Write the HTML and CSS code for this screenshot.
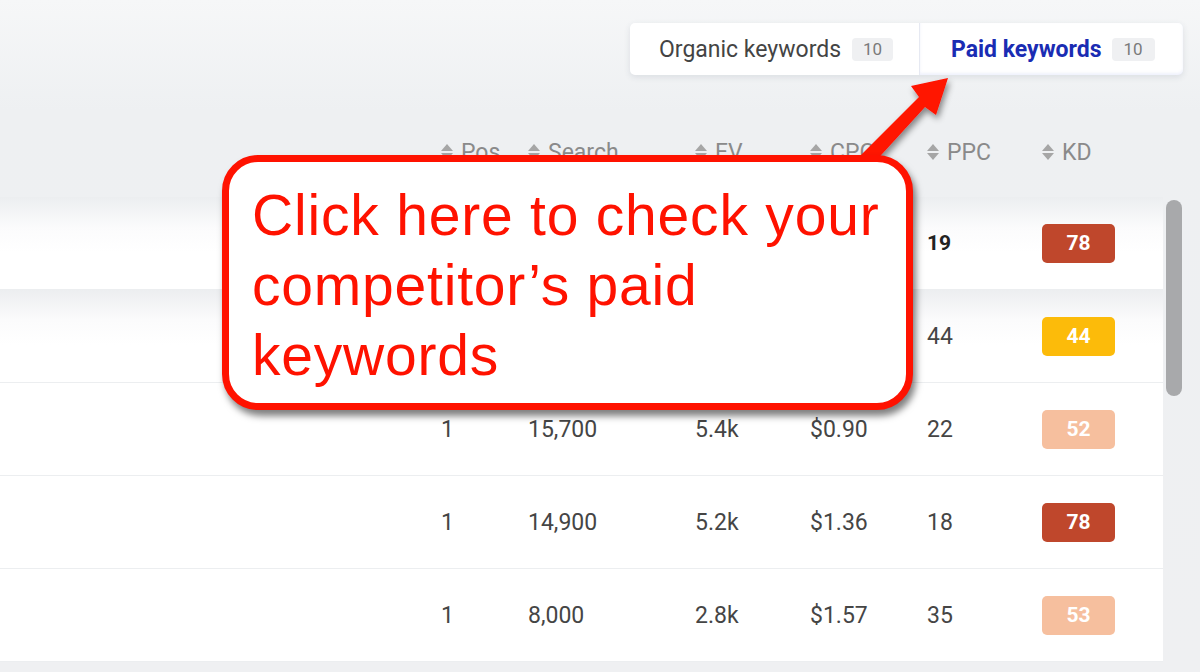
FILE: index.html
```html
<!DOCTYPE html>
<html>
<head>
<meta charset="utf-8">
<link rel="stylesheet" href="styles.css">
</head>
<body>
<div class="page">
  <div class="topbar">
    <div class="tabs">
      <div class="tab">
        <span class="tab-label">Organic keywords</span>
        <span class="count">10</span>
      </div>
      <div class="tab active">
        <span class="tab-label">Paid keywords</span>
        <span class="count">10</span>
      </div>
    </div>
  </div>

  <div class="table-area">
    <div class="table">
      <div class="row head">
        <div class="cell kw"></div>
        <div class="cell"><span class="sort"></span>Pos</div>
        <div class="cell"><span class="sort"></span>Search</div>
        <div class="cell"><span class="sort"></span>EV</div>
        <div class="cell"><span class="sort"></span>CPC</div>
        <div class="cell"><span class="sort"></span>PPC</div>
        <div class="cell"><span class="sort"></span>KD</div>
      </div>
      <div class="row body shade">
        <div class="cell kw"></div>
        <div class="cell"></div>
        <div class="cell"></div>
        <div class="cell"></div>
        <div class="cell"></div>
        <div class="cell strong">19</div>
        <div class="cell"><span class="kd kd-hard">78</span></div>
      </div>
      <div class="row body shade">
        <div class="cell kw"></div>
        <div class="cell"></div>
        <div class="cell"></div>
        <div class="cell"></div>
        <div class="cell"></div>
        <div class="cell">44</div>
        <div class="cell"><span class="kd kd-mid">44</span></div>
      </div>
      <div class="row body">
        <div class="cell kw"></div>
        <div class="cell">1</div>
        <div class="cell">15,700</div>
        <div class="cell">5.4k</div>
        <div class="cell">$0.90</div>
        <div class="cell">22</div>
        <div class="cell"><span class="kd kd-soft">52</span></div>
      </div>
      <div class="row body">
        <div class="cell kw"></div>
        <div class="cell">1</div>
        <div class="cell">14,900</div>
        <div class="cell">5.2k</div>
        <div class="cell">$1.36</div>
        <div class="cell">18</div>
        <div class="cell"><span class="kd kd-hard">78</span></div>
      </div>
      <div class="row body">
        <div class="cell kw"></div>
        <div class="cell">1</div>
        <div class="cell">8,000</div>
        <div class="cell">2.8k</div>
        <div class="cell">$1.57</div>
        <div class="cell">35</div>
        <div class="cell"><span class="kd kd-soft">53</span></div>
      </div>
    </div>
    <div class="scrolltrack">
      <div class="thumb"></div>
    </div>
  </div>

  <svg class="arrow" width="1200" height="672" viewBox="0 0 1200 672">
    <defs>
      <filter id="sh" x="-20%" y="-20%" width="140%" height="140%">
        <feDropShadow dx="2" dy="4" stdDeviation="3" flood-color="#000" flood-opacity="0.45"/>
      </filter>
    </defs>
    <polygon filter="url(#sh)" fill="#ff1200"
      points="851,165 862,176 925,107 936,115 948,78 911,86 919,97"/>
  </svg>

  <div class="callout">
    <p>Click here to check your competitor’s paid keywords</p>
  </div>
</div>
</body>
</html>
```

FILE: styles.css
```css
html, body {
  margin: 0;
  padding: 0;
}
body {
  width: 1200px;
  height: 672px;
  overflow: hidden;
  background: #eff0f2;
  font-family: Roboto, "Noto Sans", sans-serif;
}
.page {
  position: relative;
  width: 1200px;
  height: 672px;
  background: linear-gradient(#f6f7f8, #eef0f2 110px, #eff0f2);
}

/* tabs */
.topbar {
  height: 110px;
  box-sizing: border-box;
  padding: 23px 17px 0 0;
  display: flex;
  justify-content: flex-end;
  align-items: flex-start;
}
.tabs {
  display: flex;
  width: 553px;
  height: 52px;
  background: #fff;
  border-radius: 5px;
  box-shadow: 0 2px 6px rgba(60, 70, 100, 0.12);
}
.tab {
  display: flex;
  align-items: center;
  box-sizing: border-box;
  height: 52px;
}
.tab:first-child {
  width: 290px;
  padding-left: 29px;
  border-right: 1px solid #e6e9f2;
}
.tab.active {
  flex: 1;
  padding-left: 31px;
  box-shadow: inset 0 -2px 3px rgba(120, 140, 230, 0.12);
  border-radius: 0 5px 5px 0;
}
.tab-label {
  font-size: 23px;
  color: #444;
}
.tab.active .tab-label {
  color: #1a2cb3;
  font-weight: 700;
  font-size: 23px;
}
.count {
  margin-left: 11px;
  display: inline-flex;
  align-items: center;
  justify-content: center;
  width: 41px;
  height: 23px;
  border-radius: 4px;
  background: #eff0f2;
  color: #7a7a7a;
  font-size: 17px;
}
.tab.active .count {
  margin-left: 10px;
  width: 43px;
}

/* table */
.table-area {
  display: flex;
  align-items: flex-start;
}
.table {
  width: 1163px;
}
.scrolltrack {
  width: 37px;
  height: 550px;
  box-sizing: border-box;
  padding: 90px 0 0 3px;
}
.thumb {
  width: 16px;
  height: 196px;
  border-radius: 8px;
  background: #a8a9ab;
}
.row {
  display: grid;
  grid-template-columns: 441px 87px 167px 115px 117px 115px 121px;
}
.row.head {
  height: 87px;
  align-items: end;
  padding-bottom: 31px;
  box-sizing: border-box;
  color: #8a8a8a;
  font-size: 23px;
}
.row.head .cell {
  display: flex;
  align-items: center;
  height: 28px;
}
.sort {
  display: inline-block;
  position: relative;
  width: 13px;
  height: 18px;
  margin-right: 7px;
}
.sort::before, .sort::after {
  content: "";
  position: absolute;
  left: 0;
  border-left: 6.5px solid transparent;
  border-right: 6.5px solid transparent;
}
.sort::before {
  top: 1px;
  border-bottom: 7px solid #a6a6a6;
}
.sort::after {
  bottom: 1px;
  border-top: 7px solid #a6a6a6;
}
.row.body {
  height: 93px;
  box-sizing: border-box;
  border-bottom: 1px solid #eceef0;
  background: #fff;
  align-items: center;
  color: #454545;
  font-size: 23px;
}
.row.body.shade {
  background: linear-gradient(#eceef0, #fbfbfc 30px, #fff 55px);
}
.strong {
  font-weight: 700;
  color: #222;
  font-size: 21px;
}
.kd {
  display: inline-flex;
  align-items: center;
  justify-content: center;
  width: 73px;
  height: 39px;
  border-radius: 5px;
  color: #fff;
  font-weight: 700;
  font-size: 21px;
}
.kd-hard { background: #bf472c; }
.kd-mid { background: #fcbb0a; }
.kd-soft { background: #f6bf9e; }

/* annotation overlay */
.arrow {
  position: absolute;
  left: 0;
  top: 0;
}
.callout {
  position: absolute;
  left: 222px;
  top: 155px;
  width: 691px;
  height: 255px;
  box-sizing: border-box;
  border: 7px solid #ff1200;
  border-radius: 36px;
  background: #fff;
  box-shadow: 3px 6px 7px rgba(0, 0, 0, 0.5);
  padding: 18px 0 0 23px;
}
.callout p {
  margin: 0;
  font-family: "Liberation Sans", Arial, sans-serif;
  font-size: 57px;
  line-height: 70px;
  letter-spacing: 0.8px;
  color: #ff1200;
  width: 650px;
}
```
